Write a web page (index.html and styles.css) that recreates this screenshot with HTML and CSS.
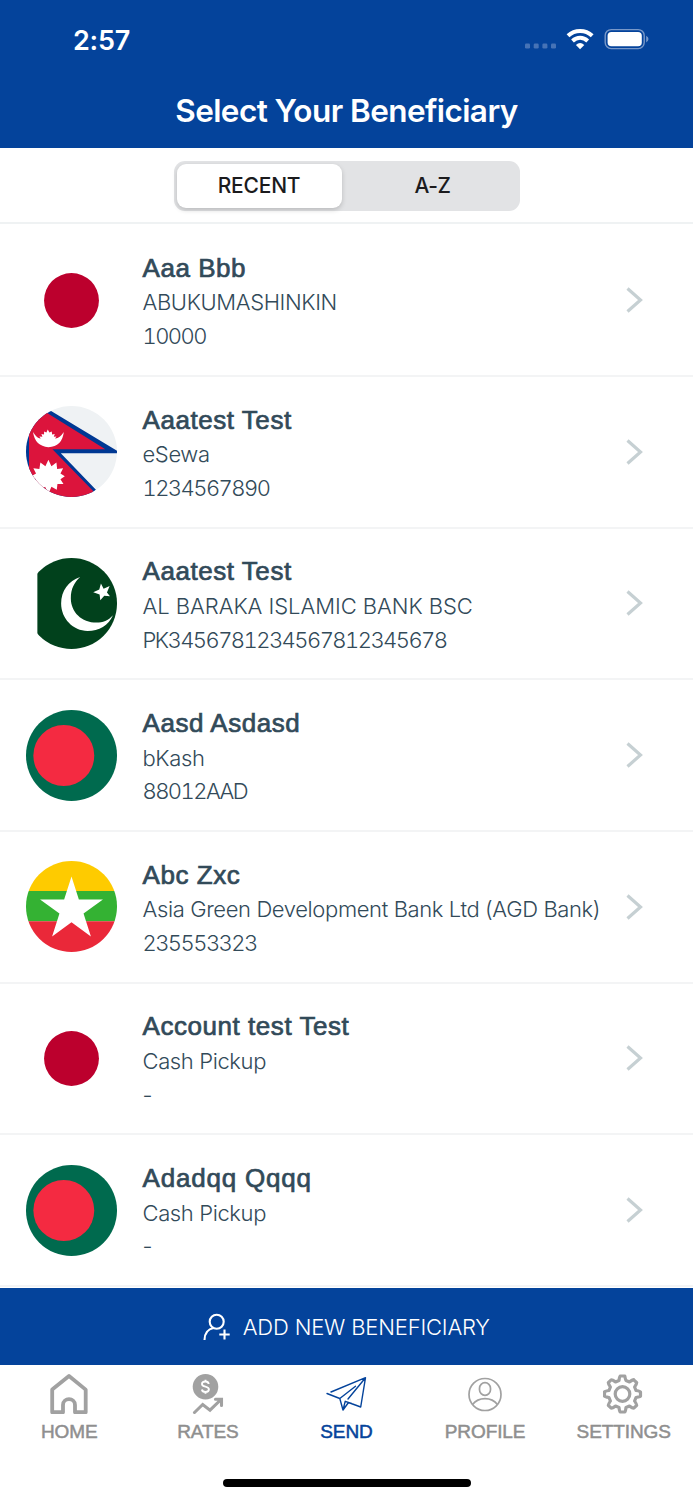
FILE: index.html
```
<!DOCTYPE html>
<html lang="en">
<head>
<meta charset="utf-8">
<title>Select Your Beneficiary</title>
<link rel="stylesheet" href="styles.css">
</head>
<body>
<svg class="defs" width="0" height="0" aria-hidden="true">
  <defs>
    <clipPath id="disc"><circle cx="136" cy="136" r="136"/></clipPath>
    <symbol id="flag-jp" viewBox="0 0 272 272"><circle cx="136" cy="136" r="82" fill="#bc002d"/></symbol>
    <symbol id="flag-np" viewBox="0 0 272 272">
      <g clip-path="url(#disc)">
        <rect width="272" height="272" fill="#eff2f4"/>
        <path d="M0 0H50L75 15L272 134V141H104L209 250L190 272H0Z" fill="#003893"/>
        <path d="M9 0H40L62 20L237 129H79L200 253V272H9Z" fill="#dc143c"/>
        <path d="M21 78Q34 99 44 97L40 91L49 92L46 84L54 85L54 76L61 79L65 70L70 79L77 76L78 85L86 84L83 92L91 91L87 97Q100 98 113 78Q108 122 67 123Q27 121 21 78Z" fill="#fff"/>
        <path d="M67 161L76 180L91 169L93 188L111 186L103 202L116 210L103 219L112 233L94 233L92 250L76 241L67 262L57 241L42 251L40 233L20 234L30 219L16 210L30 202L22 186L40 188L43 169L58 180Z" fill="#fff"/>
      </g>
    </symbol>
    <symbol id="flag-pk" viewBox="0 0 272 272">
      <g clip-path="url(#disc)">
        <rect x="34" width="238" height="272" fill="#01411c"/>
        <path d="M162 57C127 68 105 99 105 136C105 181 141 218 184 218C218 218 247 201 260 171C246 187 229 193 211 193C166 193 134 161 134 120C134 93 144 73 162 57Z" fill="#fff"/>
        <path d="M224 76L232 92L250 84L242 103L251 114L234 113L222 126L220 109L201 102L219 94Z" fill="#fff"/>
      </g>
    </symbol>
    <symbol id="flag-bd" viewBox="0 0 272 272"><circle cx="136" cy="136" r="136" fill="#006a4e"/><circle cx="113" cy="136" r="91" fill="#f42a41"/></symbol>
    <symbol id="flag-mm" viewBox="0 0 272 272">
      <g clip-path="url(#disc)">
        <path fill="#fecb00" d="M0 0H272V90H0Z"/><path fill="#34b233" d="M0 90H272V180H0Z"/><path fill="#ea2839" d="M0 180H272V272H0Z"/>
        <path d="M136 46L158 115H230L172 157L194 226L136 183L78 226L100 157L42 115H114Z" fill="#fff"/>
      </g>
    </symbol>
    <symbol id="chevron" viewBox="0 0 18 26"><path d="M1.500 1.500L14.500 13L1.500 24.500" fill="none" stroke="#c6d0d3" stroke-width="3.200"/></symbol>
  </defs>
</svg>
<div class="screen">
  <header class="header">
    <div class="status">
      <span class="time">2:57</span>
      <svg class="status-icons" width="126" height="24" viewBox="0 0 126 24">
        <g fill="#4673b6"><rect x="1" y="15.5" width="5" height="5" rx="1.3"/><rect x="9.7" y="15.5" width="5" height="5" rx="1.3"/><rect x="18.4" y="15.5" width="5" height="5" rx="1.3"/><rect x="27" y="15.5" width="5" height="5" rx="1.3"/></g>
        <g fill="none" stroke="#fff" stroke-width="4"><path d="M44 7.800C50.800 1.300 61.400 1.300 68.200 7.800"/><path d="M48.500 13C53 8.800 59.200 8.800 63.700 13"/></g>
        <path d="M56.100 21.300L51.900 17Q56.100 13.200 60.300 17Z" fill="#fff"/>
        <rect x="81.200" y="1.600" width="39" height="19" rx="6" fill="none" stroke="#7898c9" stroke-width="1.400"/>
        <rect x="83.600" y="4" width="34.200" height="14.200" rx="3.800" fill="#fff"/>
        <path d="M122.200 7.800Q124.500 9.100 124.500 11.100T122.200 14.400Z" fill="#7898c9"/>
      </svg>
    </div>
    <h1 class="title">Select Your Beneficiary</h1>
  </header>
  <div class="filter">
    <div class="segmented"><button class="segment selected">RECENT</button><button class="segment other">A-Z</button></div>
  </div>
  <main class="list">
    <article class="row"><svg class="flag"><use href="#flag-jp"/></svg><div class="info"><h2 class="name">Aaa Bbb</h2><p class="line">ABUKUMASHINKIN</p><p class="line digits">10000</p></div><svg class="chevron"><use href="#chevron"/></svg></article>
    <article class="row"><svg class="flag"><use href="#flag-np"/></svg><div class="info"><h2 class="name">Aaatest Test</h2><p class="line">eSewa</p><p class="line digits">1234567890</p></div><svg class="chevron"><use href="#chevron"/></svg></article>
    <article class="row"><svg class="flag"><use href="#flag-pk"/></svg><div class="info"><h2 class="name">Aaatest Test</h2><p class="line caps">AL BARAKA ISLAMIC BANK BSC</p><p class="line digits">PK3456781234567812345678</p></div><svg class="chevron"><use href="#chevron"/></svg></article>
    <article class="row"><svg class="flag"><use href="#flag-bd"/></svg><div class="info"><h2 class="name">Aasd Asdasd</h2><p class="line">bKash</p><p class="line digits">88012AAD</p></div><svg class="chevron"><use href="#chevron"/></svg></article>
    <article class="row"><svg class="flag"><use href="#flag-mm"/></svg><div class="info"><h2 class="name">Abc Zxc</h2><p class="line">Asia Green Development Bank Ltd (AGD Bank)</p><p class="line digits">235553323</p></div><svg class="chevron"><use href="#chevron"/></svg></article>
    <article class="row"><svg class="flag"><use href="#flag-jp"/></svg><div class="info"><h2 class="name">Account test Test</h2><p class="line">Cash Pickup</p><p class="line">-</p></div><svg class="chevron"><use href="#chevron"/></svg></article>
    <article class="row"><svg class="flag"><use href="#flag-bd"/></svg><div class="info"><h2 class="name wide">Adadqq Qqqq</h2><p class="line">Cash Pickup</p><p class="line">-</p></div><svg class="chevron"><use href="#chevron"/></svg></article>
  </main>
  <button class="add">
    <svg width="28" height="28" viewBox="0 0 28 28" fill="none" stroke="#fff" stroke-width="2.100"><circle cx="13.700" cy="8.700" r="7"/><path d="M1.500 27C1.500 20.500 5 16 10.500 15"/><path d="M21.500 16.500V26.500M16.300 21.500H26.700"/></svg>
    <span>ADD NEW BENEFICIARY</span>
  </button>
  <nav class="tabs">
    <a class="tab"><svg width="42" height="42" viewBox="0 0 42 42" fill="none" stroke="#a1a1a1" stroke-width="3.800" stroke-linejoin="round"><path d="M4.200 17.600L21 4L37.700 17.600V40.200H27V33C27 25.200 15 25.200 15 33V40.200H4.200Z"/></svg><span>HOME</span></a>
    <a class="tab"><svg width="42" height="42" viewBox="0 0 42 42"><circle cx="18.500" cy="14.700" r="12.800" fill="#a1a1a1"/><path d="M21.700 12C21.500 10 20 9.500 18.300 9.500C15.800 9.500 15 10.700 15 11.900C15 15.500 21.900 13.700 21.900 17.300C21.900 19.300 20.500 20 18.500 20C16.500 20 15.200 19.300 14.900 17.500M18.500 7.800V9.500M18.500 20V21.700" stroke="#fff" stroke-width="1.900" fill="none"/><path d="M7.500 40.500L15.700 32.500L23 38.200L33.500 28M28.500 27.200H34.500V33.500" stroke="#a1a1a1" stroke-width="3.100" fill="none" stroke-linejoin="miter" stroke-linecap="round"/></svg><span>RATES</span></a>
    <a class="tab active"><svg width="42" height="42" viewBox="-1 0 42 42" fill="none" stroke="#04439b" stroke-width="1.400" stroke-linejoin="round" stroke-linecap="round"><path d="M5 20L39.500 5.700L34.700 35L22.500 30.500L17 38L13.800 26.500L1 21.500M13.800 26.500L29.500 14.300M39.500 5.700L22 27M17 38L19.200 29.300L25.500 31.500"/></svg><span>SEND</span></a>
    <a class="tab"><svg width="42" height="42" viewBox="0.500 0 42 42" fill="none" stroke="#a1a1a1" stroke-width="1.700"><circle cx="21.500" cy="22.500" r="16"/><rect x="16" y="10.700" width="11" height="12.600" rx="5.500"/><path d="M9 32.500C15 24.600 28 24.600 34 32.500"/></svg><span>PROFILE</span></a>
    <a class="tab"><svg width="42" height="42" viewBox="1.500 0 42 42" fill="none" stroke="#a1a1a1" stroke-width="3.200" stroke-linejoin="round"><circle cx="21" cy="22" r="7.300"/><path d="M18.700 4H23.300Q24 8.200 24.500 8.500L28 9.900Q32 7.200 32.300 7.800L35.200 10.700Q35.500 11.300 33.100 15L34.500 18.500Q39 19.200 39 19.700V24.300Q39 24.900 34.500 25.500L33.100 29Q35.500 32.700 35.200 33.300L32.300 36.200Q31.700 36.800 28 34.100L24.500 35.500Q24 40 23.300 40H18.700Q18 40 17.500 35.500L14 34.100Q10.300 36.800 9.700 36.200L6.800 33.300Q6.500 32.700 8.900 29L7.500 25.500Q3 24.900 3 24.300V19.700Q3 19.200 7.500 18.500L8.900 15Q6.500 11.300 6.800 10.700L9.700 7.800Q10.300 7.200 14 9.900L17.500 8.500Q18 4 18.700 4Z"/></svg><span>SETTINGS</span></a>
  </nav>
  <div class="home-indicator"></div>
</div>
</body>
</html>
```
FILE: styles.css
```
* { box-sizing: border-box; }
body { margin: 0; background: #fff; }
.defs { display: block; height: 0; }
h1, h2, p { margin: 0; }
button { border: 0; padding: 0; background: none; font: inherit; }
.screen { width: 693px; height: 1500px; display: flex; flex-direction: column; background: #fff; overflow: hidden; }

.header { height: 147.5px; flex: none; background: #04439b; color: #fff; font-family: Inter, sans-serif; }
.status { height: 78px; padding: 2px 43px 0 73px; display: flex; justify-content: space-between; align-items: center; }
.time { font-size: 27px; font-weight: 560; letter-spacing: -0.2px; }
.status-icons { display: block; }
.title { text-align: center; font-size: 31.5px; line-height: 65px; font-weight: 560; letter-spacing: -0.58px; }

.filter { height: 76px; flex: none; padding-top: 13px; display: flex; justify-content: center; align-items: flex-start; border-bottom: 2px solid #eff2f3; }
.segmented { width: 346px; height: 50px; padding: 3px; display: flex; border-radius: 11px; background: #e2e3e5; }
.segment { flex: 1; border-radius: 9px; color: #1b1b1d; font: 450 21px Inter, sans-serif; letter-spacing: -.2px; }
.segment.selected { flex: 0 0 165px; background: #fff; box-shadow: 0 2px 5px rgba(0, 0, 0, .18); }
.segment.other { padding-left: 7px; letter-spacing: -.4px; }

.list { height: 1064px; flex: none; padding-top: 1.700px; overflow: hidden; }
.row { height: 151.700px; padding: 0 49px 0 26px; display: flex; align-items: center; border-bottom: 2px solid #f3f4f5; }
.flag { width: 91px; height: 91px; margin-right: 25.500px; flex: none; }
.info { flex: 1; color: #324a59; white-space: nowrap; padding-top: 4px; }
.name { font: 400 26px/36.500px "Liberation Sans", Arial, sans-serif; letter-spacing: .55px; -webkit-text-stroke: .7px #324a59; }
.wide { letter-spacing: .8px; }
.line { font: 300 22px/33.800px Inter, sans-serif; letter-spacing: -.38px; }
.caps { letter-spacing: -.05px; }
.digits { letter-spacing: -1.550px; font-variant-numeric: tabular-nums; }
.chevron { width: 18px; height: 26px; flex: none; }

.add { height: 77.500px; flex: none; padding-top: 1.500px; display: flex; align-items: center; justify-content: center; gap: 11.500px; background: #04439b; color: #fff; font: 300 22px Inter, sans-serif; letter-spacing: -.18px; }
.tabs { display: flex; height: 113.500px; flex: none; padding-top: 7px; }
.tab { flex: 1; display: flex; flex-direction: column; align-items: center; color: #8f8f8f; font: 400 19px/36px "Liberation Sans", Arial, sans-serif; letter-spacing: -.1px; -webkit-text-stroke: .5px currentColor; }
.tab svg { display: block; -webkit-text-stroke: 0; }
.tab.active { color: #04439b; }
.home-indicator { width: 248px; height: 8px; flex: none; margin: 0 auto; border-radius: 4px; background: #000; }
```
